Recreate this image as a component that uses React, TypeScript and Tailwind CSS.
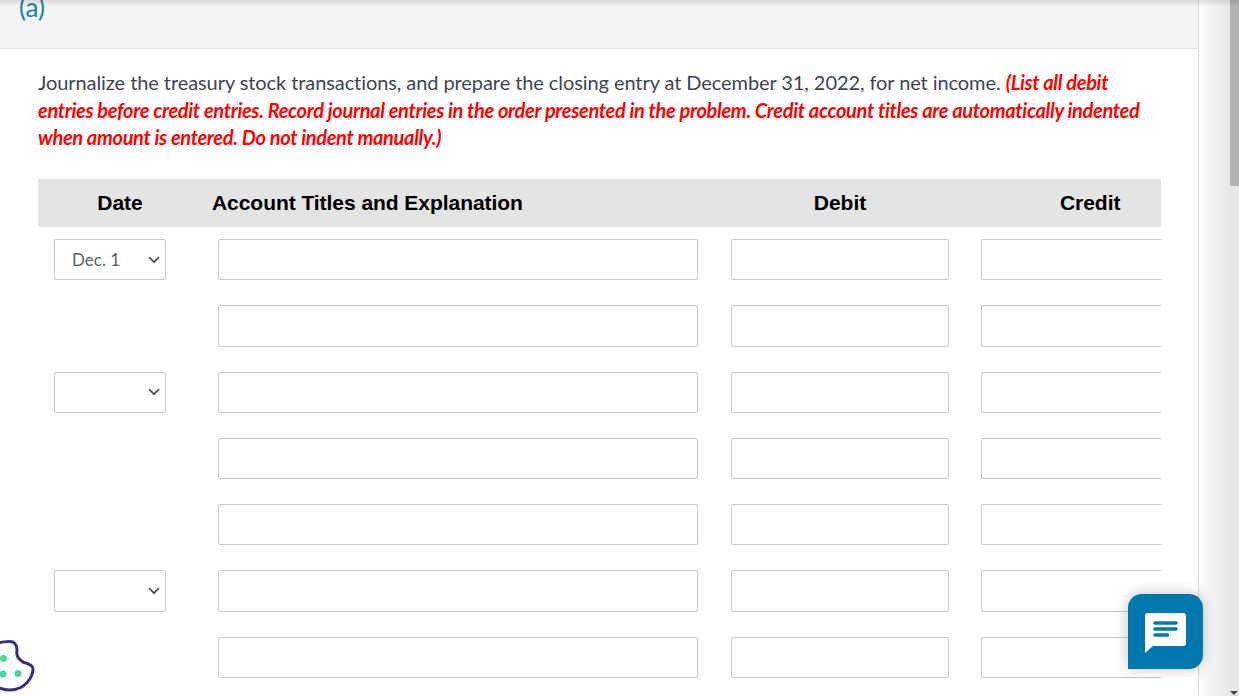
import React from "react";

const rows = [
  { date: "Dec. 1", select: true },
  { select: false },
  { date: "", select: true },
  { select: false },
  { select: false },
  { date: "", select: true },
  { select: false },
];

function DateSelect({ value }: { value: string }) {
  return (
    <div className="relative w-[112px] h-full">
      <select
        defaultValue={value}
        className="w-full h-full appearance-none bg-white border border-[#c9c9c9] rounded-[2px] pl-[17px] text-[17px] text-[#5a6068] outline-none"
      >
        <option value={value}>{value}</option>
      </select>
      <svg className="absolute right-[6px] top-1/2 -mt-[4px] pointer-events-none" width="12" height="8" viewBox="0 0 12 8" fill="none">
        <path d="M1 1.2 L6 6.2 L11 1.2" stroke="#555" strokeWidth="1.9" />
      </svg>
    </div>
  );
}

function Field({ className }: { className: string }) {
  return <input className={"h-full bg-white border border-[#c9c9c9] rounded-[2px] outline-none " + className} />;
}

export default function App() {
  return (
    <div className="relative h-[696px] w-[1239px] overflow-hidden bg-white font-['Lato','Noto_Sans',sans-serif]">
      <div className="flex h-full">
        <main className="w-[1199px] shrink-0 border-r border-[#dcdcdc]">
          <div className="h-[49px] overflow-hidden bg-[#f4f4f4] border-b border-[#e0e0e0] pl-[19px]">
            <div className="relative -top-[7px] text-[26px] leading-[28px] text-[#1a7fb5]">(a)</div>
          </div>
          <div className="pl-[38px] pt-[20px]">
            <p className="w-[1115px] text-[20px] leading-[27.5px] text-[#3d4650] tracking-[-0.08px]">
              Journalize the treasury stock transactions, and prepare the closing entry at December 31, 2022, for net income.{" "}
              <b className="italic text-[#ff0000] tracking-[-0.33px]">
                (List all debit entries before credit entries. Record journal entries in the order presented in the problem. Credit account titles are automatically indented when amount is entered. Do not indent manually.)
              </b>
            </p>
            <div className="mt-[27px] w-[1123px]">
              <div className="flex h-[48px] items-center bg-[#e4e4e4] text-[21px] font-bold text-black tracking-[-0.05px] font-['Liberation_Sans',sans-serif]">
                <div className="w-[164px] text-center">Date</div>
                <div className="w-[529px] pl-[10px]">Account Titles and Explanation</div>
                <div className="w-[218px] text-center">Debit</div>
                <div className="w-[32px]" />
                <div className="w-[180px] pl-[79px]">Credit</div>
              </div>
              <div className="mt-[12.6px] flex flex-col gap-[25px]">
                {rows.map((r, i) => (
                  <div key={i} className="flex h-[41.25px]">
                    <div className="w-[180px] pl-[16px] h-full">
                      {r.select && <DateSelect value={r.date ?? ""} />}
                    </div>
                    <Field className="w-[480px]" />
                    <div className="w-[33px]" />
                    <Field className="w-[218px]" />
                    <div className="w-[32px]" />
                    <Field className="w-[180px] border-r-0 rounded-r-none" />
                  </div>
                ))}
              </div>
            </div>
          </div>
        </main>
        <aside className="relative flex-1 bg-gradient-to-r from-[#fbfbfb] to-[#e2e2e2]">
          <div className="absolute right-0 top-0 h-full w-[9px] bg-[#e6e6e6]">
            <div className="h-[186px] bg-[#b2b2b2]" />
          </div>
        </aside>
      </div>

      {/* Shadow along the top edge */}
      <div className="absolute inset-x-0 top-0 h-[7px] bg-gradient-to-b from-[#0000001c] to-transparent pointer-events-none" />

      {/* Cookie settings */}
      <svg className="absolute left-0 top-[636px]" width="38" height="56" viewBox="0 0 38 56" fill="none">
        <path
          d="M-4 8 C0 6 8 5 13 6 C16 8 17 10 17 14 C16 19 18 23 23 26 C28 28 33 29 33 33 C33 41 25 54 10 54 C5 54 1 53 -4 51"
          stroke="#3a3278"
          strokeWidth="3"
          strokeLinecap="round"
        />
        <circle cx="3.500" cy="22.500" r="3.500" fill="#4cd69d" />
        <circle cx="3" cy="38" r="3.500" fill="#4cd69d" />
        <circle cx="18" cy="37.500" r="3.500" fill="#4cd69d" />
      </svg>

      {/* Chat button */}
      <button className="absolute left-[1128px] top-[594px] flex h-[75px] w-[75px] items-center justify-center rounded-[14px] rounded-bl-none bg-[#0077ad] shadow-[0_0_14px_rgba(0,0,0,0.25)]">
        <svg width="41" height="40" viewBox="0 0 41 40" className="mt-[2px]">
          <path d="M3 0 H38 Q41 0 41 3 V30 Q41 33 38 33 H8 L0 40 V3 Q0 0 3 0 Z" fill="#fff" />
          <g stroke="#0077ad" strokeWidth="3.600" strokeLinecap="round">
            <path d="M10 10 H31" />
            <path d="M10 16 H31" />
            <path d="M10 22 H22.500" />
          </g>
        </svg>
      </button>

      <div className="absolute right-[1px] bottom-[1px] h-0 w-0 border-x-[4px] border-t-[4px] border-x-transparent border-t-[#444]" />
    </div>
  );
}
